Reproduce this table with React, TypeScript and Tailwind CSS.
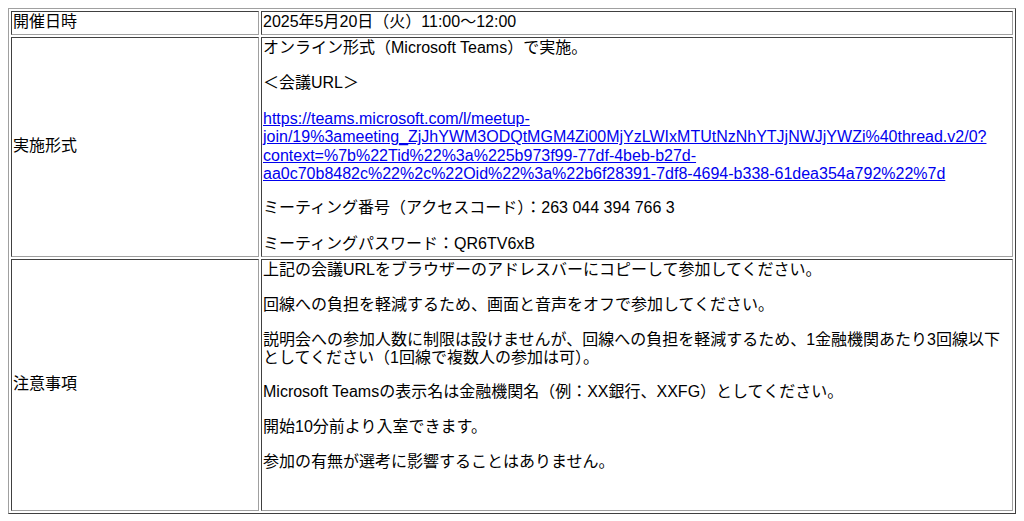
export default function App() {
  const url =
    "https://teams.microsoft.com/l/meetup-join/19%3ameeting_ZjJhYWM3ODQtMGM4Zi00MjYzLWIxMTUtNzNhYTJjNWJjYWZi%40thread.v2/0?context=%7b%22Tid%22%3a%225b973f99-77df-4beb-b27d-aa0c70b8482c%22%2c%22Oid%22%3a%22b6f28391-7df8-4694-b338-61dea354a792%22%7d";
  const cell =
    "border border-t-[#404040] border-l-[#404040] border-b-[#a0a0a0] border-r-[#a0a0a0] p-[1px] overflow-visible";
  const head = `${cell} flex items-center`;
  const line = "h-[19.6px]";
  const line3 = "h-[19.2px]";
  return (
    <div className="bg-white text-black text-[16px] leading-[18.4px] font-['Liberation_Sans','Noto_Sans_CJK_JP',sans-serif] p-[8px] min-h-[521px]">
      <div className="grid grid-cols-[248px_1fr] grid-rows-[23.6px_220px_252px] gap-[2px] p-[2px] border border-t-[#a0a0a0] border-l-[#a0a0a0] border-b-[#404040] border-r-[#404040]">
        <div className={head}>
          <div className={line}>開催日時</div>
        </div>
        <div className={cell}>
          <div className={line}>2025年5月20日（火）11:00〜12:00</div>
        </div>

        <div className={head}>
          <div className={line}>実施形式</div>
        </div>
        <div className={cell}>
          <p className={line}>オンライン形式（Microsoft Teams）で実施。</p>
          <p className={`${line} mt-4`}>＜会議URL＞</p>
          <p className="mt-4">
            <a href={url} className="text-[#0000ee] underline">
              {url}
            </a>
          </p>
          <p className={`${line} mt-4`}>ミーティング番号（アクセスコード）：263 044 394 766 3</p>
          <p className={`${line} mt-4`}>ミーティングパスワード：QR6TV6xB</p>
        </div>

        <div className={head}>
          <div className={line}>注意事項</div>
        </div>
        <div className={cell}>
          <p className={line3}>上記の会議URLをブラウザーのアドレスバーにコピーして参加してください。</p>
          <p className={`${line3} mt-4`}>回線への負担を軽減するため、画面と音声をオフで参加してください。</p>
          <p className="mt-4 h-[36px] leading-[18px]">
            説明会への参加人数に制限は設けませんが、回線への負担を軽減するため、1金融機関あたり3回線以下としてください（1回線で複数人の参加は可）。
          </p>
          <p className={`${line3} mt-4`}>Microsoft Teamsの表示名は金融機関名（例：XX銀行、XXFG）としてください。</p>
          <p className={`${line3} mt-4`}>開始10分前より入室できます。</p>
          <p className={`${line3} mt-4`}>参加の有無が選考に影響することはありません。</p>
        </div>
      </div>
    </div>
  );
}
